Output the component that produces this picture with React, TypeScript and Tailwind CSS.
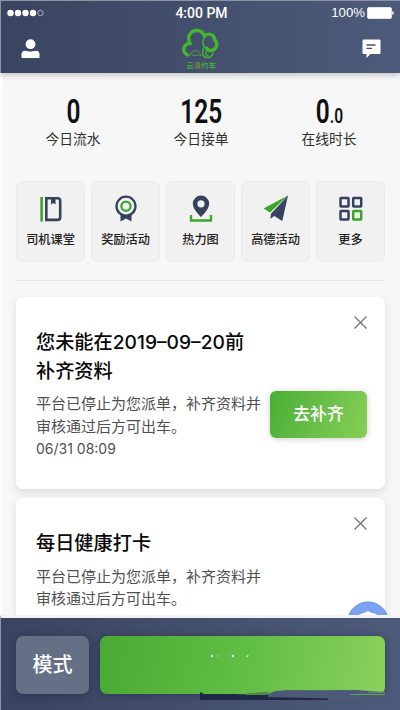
import type { ReactNode } from 'react'

const stats = [
  { value: '0', decimal: '', label: '今日流水' },
  { value: '125', decimal: '', label: '今日接单' },
  { value: '0', decimal: '.0', label: '在线时长' },
]

const BookIcon = () => (
  <svg width="22" height="26" viewBox="0 0 22 26" fill="none">
    <path d="M1.600 1v24.500" stroke="#3aa527" strokeWidth="2.600" />
    <path d="M6.300 2.300h11.200q2.700 0 2.700 2.700v16.200q0 2.700-2.700 2.700H6.300z" stroke="#36415e" strokeWidth="2.600" />
    <path d="M11 2h4.500v6.600l-2.200-1.500L11 8.600z" fill="#36415e" />
  </svg>
)

const MedalIcon = () => (
  <svg width="22" height="27" viewBox="0 0 22 27" fill="none">
    <path d="M5.500 19v7.500l5.500-3 5.500 3V19z" fill="#36415e" />
    <circle cx="11" cy="11.200" r="9.500" fill="#f1f1f1" stroke="#36415e" strokeWidth="2.300" />
    <circle cx="11" cy="11.200" r="4.600" stroke="#3aa527" strokeWidth="2.300" />
  </svg>
)

const PinIcon = () => (
  <svg width="24" height="27" viewBox="0 0 24 27" fill="none">
    <path d="M2 20v5.500h20V20" stroke="#3aa527" strokeWidth="2.300" />
    <path
      fillRule="evenodd"
      d="M12 .5a8.200 8.200 0 0 0-8.200 8.200c0 5.600 8.200 13.300 8.200 13.300s8.200-7.700 8.200-13.300A8.200 8.200 0 0 0 12 .5zm0 4.700a3.600 3.600 0 1 1 0 7.200 3.600 3.600 0 0 1 0-7.200z"
      fill="#36415e"
    />
  </svg>
)

const PlaneIcon = () => (
  <svg width="26" height="27" viewBox="0 0 26 27">
    <path d="M25 .5.500 13.500 7 17.500z" fill="#3aa527" />
    <path d="M25 .5 8 18.700l-.7 5 4-2.700 8 5z" fill="#36415e" />
    <path d="M25 .5 11 20.500" stroke="#59647c" strokeWidth=".5" />
  </svg>
)

const GridIcon = () => (
  <svg width="24" height="26" viewBox="0 0 24 26" fill="none" stroke="#36415e" strokeWidth="2.500">
    <rect x="1.500" y="1.900" width="8" height="8.600" rx=".5" />
    <rect x="14.200" y="1.900" width="8" height="8.600" rx=".5" />
    <rect x="1.500" y="15" width="8" height="8.600" rx=".5" />
    <rect x="14.200" y="15" width="8" height="8.600" rx=".5" stroke="#3aa527" />
  </svg>
)

const shortcuts = [
  { label: '司机课堂', icon: <BookIcon /> },
  { label: '奖励活动', icon: <MedalIcon /> },
  { label: '热力图', icon: <PinIcon /> },
  { label: '高德活动', icon: <PlaneIcon /> },
  { label: '更多', icon: <GridIcon /> },
]

function StatusBar() {
  return (
    <div className="grid h-6 grid-cols-3 items-center pr-[6px] pl-[6px] text-white">
      <svg width="38" height="8" viewBox="0 0 38 8" fill="#fff">
        <circle cx="3.500" cy="4" r="3.200" />
        <circle cx="11" cy="4" r="3.200" />
        <circle cx="18.500" cy="4" r="3.200" />
        <circle cx="26" cy="4" r="3.200" />
        <circle cx="33.500" cy="4" r="2.700" fill="none" stroke="#cdd1da" strokeWidth=".8" />
      </svg>
      <span className="ml-[2px] text-center font-[Roboto,sans-serif] text-[14px] font-medium whitespace-nowrap">4:00 PM</span>
      <div className="flex items-center justify-end gap-[2px]">
        <span className="font-['Liberation_Sans',sans-serif] text-[13.200px]">100%</span>
        <svg width="27" height="12" viewBox="0 0 27 12">
          <rect x=".5" y=".5" width="24" height="11" rx="1.500" fill="#fff" stroke="#dfe2e8" />
          <path d="M25.300 4q1.500 0 1.500 2t-1.500 2z" fill="#fff" />
        </svg>
      </div>
    </div>
  )
}

function Logo() {
  return (
    <div className="flex flex-col items-center">
      <svg width="38" height="36" viewBox="0 0 38 36" fill="none" stroke="#45b52f" strokeLinecap="round">
        <path d="M5.500 30C-.5 26.500 1 19 8 18.500 4.500 11 9 5.500 15 5.500c4 0 6.500 2.500 7.500 6" strokeWidth="3.400" />
        <path d="M22.500 10.500c5-3 10-.5 10 4 4.500 4.500 1.500 11-3.500 11-2.500 0-4-1-4.500-2.500" strokeWidth="3.400" />
        <path d="M21.500 14c-2 4 .8 6 .5 8.500-.3 2.500-1.500 3-1.500 5.500 0 5.500 9 6 10.500.5" strokeWidth="1.500" />
        <path d="M26 30.300a2.200 2.200 0 1 1 1.500-3.500" strokeWidth="1.300" />
        <path d="M8 30.500c.3-2.500 1.500-2.500 3-4 1.200-1 4.500-1 5.500 0 .7 1.500 2 1.500 2 4M10.500 30.500q1.300-1.600 2.600 0h1.600q1.300-1.600 2.600 0" strokeWidth=".9" />
      </svg>
      <span className="text-[7.400px] leading-[9px] font-medium whitespace-nowrap text-[#45b52f]">
        云<span className="text-[#7a8b35]">清</span>约车
      </span>
    </div>
  )
}

function Header() {
  return (
    <header className="relative z-10 h-[73px] shrink-0 border-t border-l border-[#8b93a5] bg-linear-to-r from-[#394460] to-[#4d5b7a] shadow-[0_2px_6px_rgba(0,0,0,0.22)]">
      <StatusBar />
      <div className="flex items-start justify-between pr-[19px] pl-5">
        <svg className="mt-[14px]" width="19" height="20" viewBox="0 0 19 20" fill="#fff">
          <circle cx="9.500" cy="5.200" r="4.900" />
          <path d="M.5 19v-3.700q0-3.500 3.500-3.500 5.500 1.500 11 0 3.500 0 3.500 3.500V19z" />
        </svg>
        <Logo />
        <svg className="mt-[14px]" width="19" height="20" viewBox="0 0 19 20">
          <path d="M1.500.5h16q1 0 1 1v12.500q0 1-1 1H8.500L4.500 19v-4h-3q-1 0-1-1V1.500q0-1 1-1z" fill="#fff" />
          <path d="M4.500 6h9M4.500 9.300h5.500" stroke="#45516e" strokeWidth="1.300" />
        </svg>
      </div>
    </header>
  )
}

type NoticeCardProps = { title: ReactNode; date?: string; action?: string }

function NoticeCard({ title, date, action }: NoticeCardProps) {
  return (
    <article className="flex h-[192px] shrink-0 rounded-[7px] bg-white pl-5 shadow-[0_3px_8px_rgba(0,0,0,0.11)]">
      <div className="w-[233px] shrink-0 pt-[31px]">
        <h2 className="text-[19.200px] leading-[28.500px] font-medium whitespace-nowrap text-[#080808]">{title}</h2>
        <p className="mt-2 text-[15px] leading-[22.500px] whitespace-nowrap text-[#505050]">
          平台已停止为您派单，补齐资料并
          <br />
          审核通过后方可出车。
        </p>
        {date && <time className="block text-[14px] leading-[22.500px] text-[#505050]">{date}</time>}
      </div>
      <div className="flex flex-1 flex-col items-end pt-[19px] pr-[18px]">
        <svg width="13" height="13" viewBox="0 0 13 13" stroke="#707070" strokeWidth="1.200">
          <path d="m.5.5 12 12M12.500.5l-12 12" />
        </svg>
        {action && (
          <button className="mt-[62px] h-[47px] w-[97px] rounded-[6px] bg-linear-[110deg] from-[#4aae35] to-[#87cf58] text-[17px] font-medium text-white shadow-[0_1px_6px_rgba(0,0,0,0.2)]">
            {action}
          </button>
        )}
      </div>
    </article>
  )
}

function Footer() {
  return (
    <footer className="flex h-[95px] shrink-0 gap-[11px] border-t-[3px] border-l border-t-[#f3f3f4] border-l-[#8b93a5] bg-linear-to-r from-[#394460] to-[#4d5b7a] px-[15px] pt-[18px]">
      <button className="h-[58px] w-[73px] rounded-[7px] bg-[#657086] text-[20px] font-medium text-white shadow-[0_2px_8px_rgba(25,32,60,0.45)]">
        模式
      </button>
      <div className="relative h-[58px] w-[285px] rounded-[7px] bg-linear-[100deg] from-[#4baa34] via-[#60bd45] to-[#8bd15b] shadow-[0_1px_7px_rgba(25,32,60,0.45)]">
        <svg className="absolute top-0 left-0" width="285" height="66" viewBox="0 0 285 66">
          <path d="M166 59q6-3 10-4 14-1.500 30-.7l50-.3 29 2v3q0 5-7 5.500H160z" fill="#4c5977" />
          <path d="M100 56l4 2h32l4 1h28v2l60 1.500V64H100z" fill="#1f2944" />
          <path d="M146 57.500l24-2-5 3.500h-19z" fill="#4d8a48" />
          <path d="M268 56.200h17M250 58.500h35" stroke="#6fae58" strokeWidth=".8" />
          <g fill="#fff">
            <circle cx="112" cy="20" r="1.200" />
            <circle cx="133" cy="20" r="1.200" />
            <path d="m146 21 1-1.500h2l-1.200 1z" />
            <path d="M116 20h4M128 20h3" stroke="#9bdc83" strokeWidth=".5" />
          </g>
        </svg>
      </div>
    </footer>
  )
}

export default function App() {
  return (
    <div className="flex h-[710px] w-[400px] flex-col overflow-hidden bg-[#f7f7f7] font-[Inter,'Noto_Sans_CJK_SC',sans-serif]">
      <Header />

      <main className="relative flex min-h-0 flex-1 flex-col overflow-hidden border-l-2 border-white pr-[15px] pl-[14px]">
        {/* Today's numbers */}
        <section className="flex shrink-0 justify-between pt-[22px] pr-[28px] pl-[29px]">
          {stats.map((stat) => (
            <div key={stat.label} className="flex w-14 flex-col items-center">
              <div className="flex h-[34px] origin-center scale-x-[0.74] items-baseline font-[Roboto,sans-serif] text-[33px] leading-[34px] font-semibold whitespace-nowrap text-[#101010]">
                {stat.value}
                {stat.decimal && <span className="text-[21px] leading-none">{stat.decimal}</span>}
              </div>
              <span className="text-[13.800px] leading-5 whitespace-nowrap text-[#303030]">{stat.label}</span>
            </div>
          ))}
        </section>

        {/* Shortcuts */}
        <nav className="mt-[32px] flex shrink-0 justify-between">
          {shortcuts.map((item) => (
            <div key={item.label} className="flex h-[81px] w-[69px] flex-col items-center rounded-[6px] border border-[#ebebeb] bg-[#f1f1f1] pt-[13px]">
              <div className="flex h-[27px] items-center">{item.icon}</div>
              <span className="mt-[9px] text-[12.200px] leading-[18px] font-medium whitespace-nowrap text-[#202020]">{item.label}</span>
            </div>
          ))}
        </nav>

        <hr className="mt-[18px] shrink-0 border-t-[1.500px] border-[#e7e7e7]" />

        {/* Notices */}
        <div className="mt-[16px] flex flex-col gap-[9px]">
          <NoticeCard
            title={
              <>
                您未能在2019–09–20前
                <br />
                补齐资料
              </>
            }
            date="06/31 08:09"
            action="去补齐"
          />
          <NoticeCard title="每日健康打卡" />
        </div>

        {/* Floating assistant bubble, half hidden by the footer */}
        <svg className="absolute right-[11px] bottom-0" width="42" height="14" viewBox="0 0 42 14">
          <circle cx="21" cy="21.500" r="20.500" fill="#7ba2f0" stroke="#6690e4" />
          <path d="M12 14q3-2 5-2l4-2 4 2q3 0 5 2z" fill="#fff" />
        </svg>
      </main>

      <Footer />
    </div>
  )
}
